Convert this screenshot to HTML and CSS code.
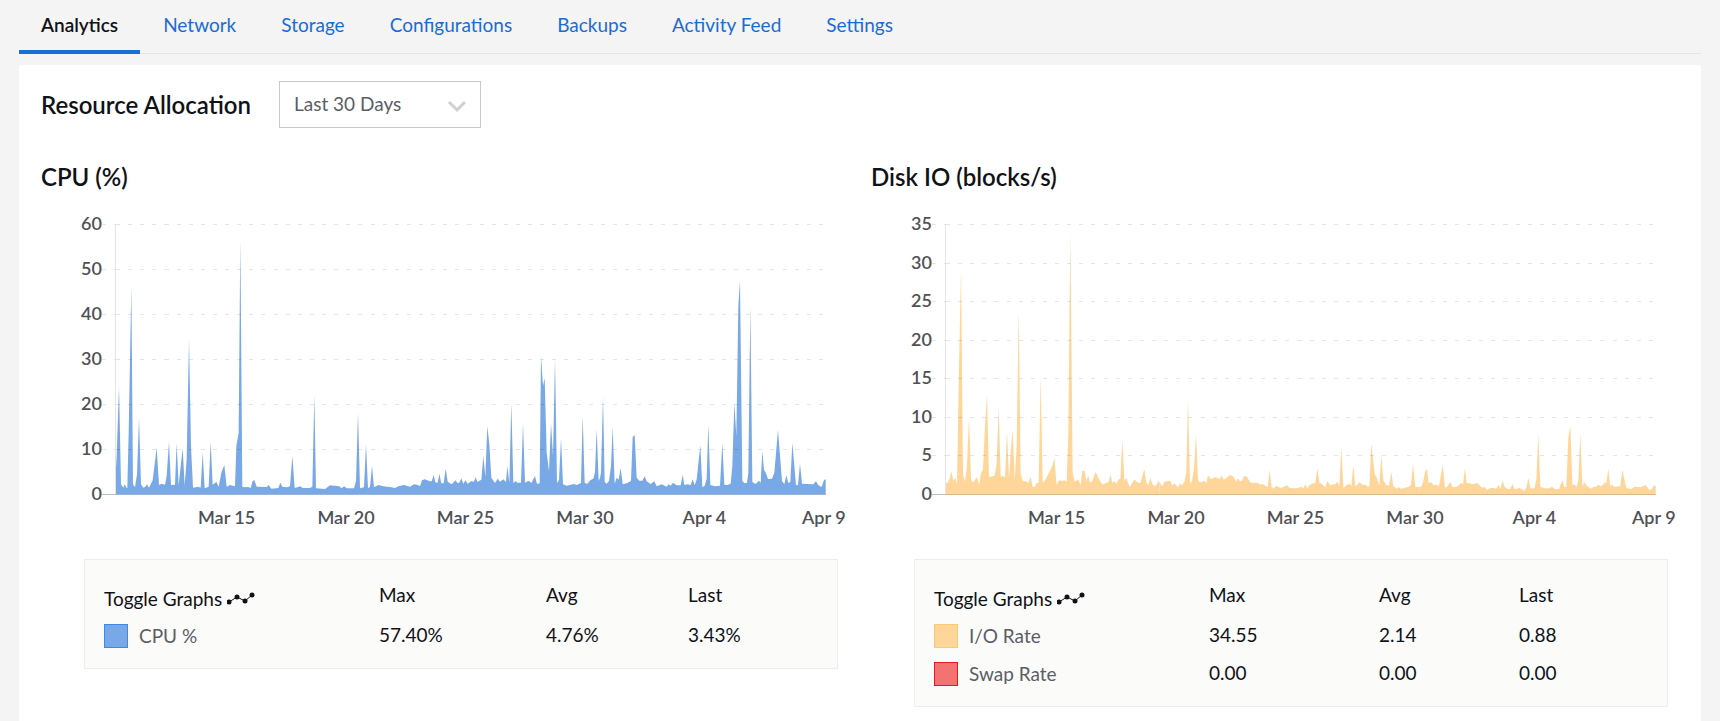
FILE: index.html
```html
<!DOCTYPE html>
<html lang="en">
<head>
<meta charset="utf-8">
<meta name="viewport" content="width=device-width, initial-scale=1">
<title>Analytics</title>
<link rel="stylesheet" href="styles.css">
</head>
<body>
<nav class="tabs" aria-label="Sections">
  <a class="tab tab-active" href="#analytics" aria-current="page">Analytics</a>
  <a class="tab" href="#network">Network</a>
  <a class="tab" href="#storage">Storage</a>
  <a class="tab" href="#configurations">Configurations</a>
  <a class="tab" href="#backups">Backups</a>
  <a class="tab" href="#activity">Activity Feed</a>
  <a class="tab" href="#settings">Settings</a>
</nav>
<main class="panel">
  <header class="panel-head">
    <h2 class="title"><label for="range">Resource Allocation</label></h2>
    <div class="picker">
      <select class="picker-select" id="range">
        <option>Last 30 Days</option>
        <option>Last 24 Hours</option>
      </select>
      <svg class="picker-arrow" width="20" height="14" viewBox="0 0 20 14" aria-hidden="true"><path d="M2 2l8 8 8-8"/></svg>
    </div>
  </header>
  <div class="charts">
    <section class="chart">
      <h2 class="title">CPU (%)</h2>
      <svg class="plot" role="img" aria-label="CPU usage over the last 30 days">
        <svg class="area area-cpu" width="100%" height="270" viewBox="0 0 2133 810" preserveAspectRatio="none">
          <path transform="translate(-165 -74)" d="M165 884V860L170 770 177 560 183 855 190 865 194 855 200 866 202 866 206 700 214 260 219 855 225 864 231 825 237 655 243 855 250 865 256 862 261 855 267 865 278 843 290 745 297 857 305 853 315 856 320 830 327 727 333 857 345 856 350 732 356 858 362 800 368 747 374 858 380 780 387 420 393 740 399 865 415 862 422 865 428 760 434 867 446 862 452 727 458 856 469 848 476 862 484 820 493 797 500 862 510 857 525 861 529 740 536 700 541 120 547 862 555 864 565 863 572 866 578 845 583 842 590 862 620 863 626 857 634 868 655 866 661 850 667 862 681 864 690 861 697 770 704 866 714 863 721 861 728 866 750 866 757 862 763 588 768 867 795 869 810 858 838 861 840 863V884Z"/>
          <path transform="translate(675 -74)" d="M0 884V863L5 867 12 861 20 867 42 867 48 845 54 640 60 867 72 864 78 735 84 867 90 862 96 800 102 864 115 857 130 861 155 864 165 866 175 861 192 857 210 862 222 855 234 857 240 861 246 843 254 840 270 846 275 846 281 826 286 849 293 850 298 823 304 852 311 852 317 808 323 847 335 855 347 843 352 851 358 850 364 837 370 853 376 843 383 853 395 845 401 848 407 834 412 848 424 841 430 770 436 832 442 680 448 735 454 835 465 851 473 838 480 847 490 840 498 848 502 800 508 850 514 612 520 852 526 845 532 850 543 850 549 673 555 850 566 844 574 851 585 830 591 854 599 852 603 470 609 560 614 536 620 760 627 815 633 672 639 770 645 478 651 852 657 842 663 717 669 855 680 859 702 854 710 857 723 851 728 650 734 850 741 854 752 842 760 838 765 818 770 690 776 845 780 835V884Z"/>
          <path transform="translate(1455 -74)" d="M0 884V835L3 820 9 592 14 848 20 853 27 845 33 800 38 683 44 853 50 835 56 841 62 806 68 855 80 852 93 845 98 713 104 707 110 835 118 844 127 844 134 831 140 846 152 854 163 846 170 861 185 855 200 862 206 855 212 859 219 850 230 858 242 858 248 826 253 857 262 855 272 857 278 840 284 858 290 840 301 738 307 863 314 860 320 838 325 675 331 857 345 861 360 859 367 730 373 856 382 857 392 853 397 800 403 610 409 710 415 320 420 242 427 845 434 852 441 850 445 820 451 322 457 848 467 854 477 844 482 850 487 755 492 812 497 820 504 839 516 838 523 820 534 692 546 845 553 854 559 828 565 851 571 848 577 730 588 858 594 857 600 793 606 853 640 855 648 846 655 858 665 863 672 842 677 840V884Z"/>
        </svg>
        <g class="grid">
          <line x1="1" x2="100%" y1="0" y2="0" pathLength="703"/><line x1="1" x2="100%" y1="45" y2="45" pathLength="703"/><line x1="1" x2="100%" y1="90" y2="90" pathLength="703"/><line x1="1" x2="100%" y1="135" y2="135" pathLength="703"/><line x1="1" x2="100%" y1="180" y2="180" pathLength="703"/><line x1="1" x2="100%" y1="225" y2="225" pathLength="703"/>
          <path d="M-13 0H0M-13 45H0M-13 90H0M-13 135H0M-13 180H0M-13 225H0"/>
        </g>
        <line class="axis-y" x1="0" x2="0" y1="0" y2="270"/>
        <line class="axis-x" x1="-13" x2="0" y1="270" y2="270"/>
        <line class="base-cpu" x1="0" x2="100%" y1="270" y2="270"/>
        <g class="label-y">
          <text x="-13" y="6">60</text><text x="-13" y="51">50</text><text x="-13" y="96">40</text><text x="-13" y="141">30</text><text x="-13" y="186">20</text><text x="-13" y="231">10</text><text x="-13" y="276">0</text>
        </g>
        <g class="label-x">
          <text x="15.7%" y="300">Mar 15</text><text x="32.5%" y="300">Mar 20</text><text x="49.3%" y="300">Mar 25</text><text x="66.1%" y="300">Mar 30</text><text x="82.9%" y="300">Apr 4</text><text x="99.7%" y="300">Apr 9</text>
        </g>
      </svg>
      <div class="legend">
        <table class="stats">
          <colgroup><col class="col-name"><col class="col-max"><col class="col-avg"><col></colgroup>
          <thead><tr>
            <th class="toggle" scope="col">Toggle Graphs <svg class="spark" width="28" height="14" viewBox="0 0 28 14" aria-hidden="true"><path d="M2 10L10 5 18 9 25 3"/><circle cx="2" cy="10" r="2.5"/><circle cx="10" cy="5" r="2.5"/><circle cx="18" cy="9" r="2.5"/><circle cx="25" cy="3" r="2.5"/></svg></th>
            <th scope="col">Max</th><th scope="col">Avg</th><th scope="col">Last</th>
          </tr></thead>
          <tbody>
            <tr><th scope="row"><button class="series" type="button"><span class="swatch swatch-cpu"></span>CPU %</button></th><td>57.40%</td><td>4.76%</td><td>3.43%</td></tr>
          </tbody>
        </table>
      </div>
    </section>
    <section class="chart">
      <h2 class="title">Disk IO (blocks/s)</h2>
      <svg class="plot" role="img" aria-label="Disk IO over the last 30 days">
        <svg class="area area-io" width="100%" height="270" viewBox="0 0 2133 810" preserveAspectRatio="none">
          <path transform="translate(-136 -74)" d="M136 884V851L143 851 150 838 155 815 161 845 167 835 172 855 177 560 184 205 190 825 196 847 202 800 208 650 214 838 220 850 232 833 238 857 244 822 250 810 255 700 262 585 268 833 285 829 291 790 297 622 303 832 310 829 316 836 322 695 328 838 333 760 339 690 345 845 351 740 357 330 363 825 369 845 378 846 386 851 393 833 399 863 405 864 411 851 417 851 423 530 429 850 437 842 450 816 458 800 464 775 471 858 478 843 488 845 495 843 501 848 506 700 512 97 519 820 525 848 535 840 543 857 548 815 555 814 560 845 566 829 571 850 578 845 588 818 597 838 608 856 620 850 627 848 632 825 638 850 644 845 650 853 656 841 662 838 668 718 674 845 680 836 690 863 698 851 704 840 712 849 722 852 728 830 734 810 740 850 746 858 752 835 758 855 768 861 776 845 780 850V884Z"/>
          <path transform="translate(644 -74)" d="M0 884V850L8 861 14 847 32 844 38 860 44 852 55 864 61 853 67 858 74 848 80 820 85 598 91 855 97 845 103 810 109 705 115 842 121 850 134 844 140 853 145 827 153 839 168 833 180 840 186 828 192 841 200 837 211 826 222 833 229 847 235 837 241 846 246 845 253 831 261 831 272 850 295 851 302 856 308 854 318 860 324 863 330 812 336 863 342 868 350 859 362 866 372 863 381 858 390 866 403 867 415 866 424 862 431 867 437 855 443 867 450 857 457 853 467 851 473 806 479 850 487 854 497 864 503 846 512 858 522 855 527 855 533 847 539 860 545 742 551 866 560 858 569 853 575 860 581 797 587 862 599 849 610 857 618 856 624 863 629 861 635 732 645 825 652 837 659 860 665 767 671 843 680 857 688 860 695 818 701 860 712 868 718 863 724 868 745 863 754 857 760 793 767 864 777 862 780 864V884Z"/>
          <path transform="translate(1424 -74)" d="M0 884V864L4 862 10 850 16 818 22 808 27 852 33 848 42 858 50 856 58 861 64 825 69 798 76 865 82 863 92 848 98 862 110 863 118 858 124 850 130 856 136 805 141 852 150 852 158 855 174 851 184 863 190 865 195 862 202 872 212 866 222 866 230 868 237 857 242 868 249 844 255 863 265 870 272 868 278 854 285 870 300 866 315 874 321 862 326 836 332 865 338 868 345 865 350 840 356 703 362 863 375 867 390 867 397 862 405 869 418 870 428 842 434 864 440 862 446 715 452 680 458 858 464 855 470 864 476 845 482 700 488 862 494 848 502 860 513 868 523 862 530 862 536 856 543 861 550 857 555 849 560 852 566 808 572 862 577 855 583 862 602 861 608 812 620 866 635 869 645 862 662 864 678 857 690 873 697 868 703 858 708 860V884Z"/>
        </svg>
        <g class="grid">
          <line x1="1" x2="100%" y1="0" y2="0" pathLength="703"/><line x1="1" x2="100%" y1="39" y2="39" pathLength="703"/><line x1="1" x2="100%" y1="77" y2="77" pathLength="703"/><line x1="1" x2="100%" y1="116" y2="116" pathLength="703"/><line x1="1" x2="100%" y1="154" y2="154" pathLength="703"/><line x1="1" x2="100%" y1="193" y2="193" pathLength="703"/><line x1="1" x2="100%" y1="231" y2="231" pathLength="703"/>
          <path d="M-13 0H0M-13 39H0M-13 77H0M-13 116H0M-13 154H0M-13 193H0M-13 231H0"/>
        </g>
        <line class="axis-y" x1="0" x2="0" y1="0" y2="270"/>
        <line class="axis-x" x1="-13" x2="0" y1="270" y2="270"/>
        <line class="base-io" x1="0" x2="100%" y1="270" y2="270"/>
        <g class="label-y">
          <text x="-13" y="6">35</text><text x="-13" y="45">30</text><text x="-13" y="83">25</text><text x="-13" y="122">20</text><text x="-13" y="160">15</text><text x="-13" y="199">10</text><text x="-13" y="237">5</text><text x="-13" y="276">0</text>
        </g>
        <g class="label-x">
          <text x="15.7%" y="300">Mar 15</text><text x="32.5%" y="300">Mar 20</text><text x="49.3%" y="300">Mar 25</text><text x="66.1%" y="300">Mar 30</text><text x="82.9%" y="300">Apr 4</text><text x="99.7%" y="300">Apr 9</text>
        </g>
      </svg>
      <div class="legend">
        <table class="stats stats-io">
          <colgroup><col class="col-name"><col class="col-max"><col class="col-avg"><col></colgroup>
          <thead><tr>
            <th class="toggle" scope="col">Toggle Graphs <svg class="spark" width="28" height="14" viewBox="0 0 28 14" aria-hidden="true"><path d="M2 10L10 5 18 9 25 3"/><circle cx="2" cy="10" r="2.5"/><circle cx="10" cy="5" r="2.5"/><circle cx="18" cy="9" r="2.5"/><circle cx="25" cy="3" r="2.5"/></svg></th>
            <th scope="col">Max</th><th scope="col">Avg</th><th scope="col">Last</th>
          </tr></thead>
          <tbody>
            <tr><th scope="row"><button class="series" type="button"><span class="swatch swatch-io"></span>I/O Rate</button></th><td>34.55</td><td>2.14</td><td>0.88</td></tr>
            <tr><th scope="row"><button class="series" type="button"><span class="swatch swatch-swap"></span>Swap Rate</button></th><td>0.00</td><td>0.00</td><td>0.00</td></tr>
          </tbody>
        </table>
      </div>
    </section>
  </div>
</main>
</body>
</html>
```
FILE: styles.css
```css
* { box-sizing: border-box; }
body {
  margin: 0;
  padding: 0 19px;
  background: #f4f4f4;
  color: #101218;
  font: 400 19px/24px Lato, "Open Sans", sans-serif;
}
.tabs {
  display: flex;
  gap: 1px;
  height: 54px;
  box-shadow: inset 0 -1px 0 #e3e5e8;
}
.tab {
  padding: 13px 22px 0;
  color: #1a6cd4;
  text-decoration: none;
}
.tab-active {
  border-bottom: 4px solid #1670d6;
  color: #101218;
  font-weight: 600;
}
.panel {
  margin-top: 11px;
  padding: 16px 22px 8px;
  min-height: calc(100vh - 65px);
  background: #fff;
}
.panel-head { display: flex; align-items: center; gap: 28px; }
.title {
  margin: 0;
  font-size: 24px;
  line-height: 32px;
  font-weight: 600;
}
.picker { display: grid; align-items: center; width: 202px; }
.picker-select {
  grid-area: 1 / 1;
  width: 100%;
  height: 47px;
  padding: 0 40px 2px 14px;
  appearance: none;
  border: 1px solid #c6c8ca;
  border-radius: 0;
  background: #fff;
  color: #5a5e66;
  font: inherit;
}
.picker-arrow {
  grid-area: 1 / 1;
  justify-self: end;
  margin: 4px 14px 0 0;
  fill: none;
  stroke: #d0d0d0;
  stroke-width: 3;
  pointer-events: none;
}
.charts {
  display: grid;
  grid-template-columns: repeat(2, minmax(0, 1fr));
  gap: 22px;
  margin-top: 33px;
}
.chart { display: flex; flex-direction: column; }
.plot {
  display: block;
  width: calc(100% - 97px);
  height: 300px;
  margin: 31px 23px 35px 74px;
  overflow: visible;
}
.area-cpu { fill: #78a9e6; }
.area-io { fill: #ffd699; }
.grid { fill: none; stroke: #000; stroke-opacity: .1; stroke-width: 1; stroke-dasharray: 4 8; }
.grid, .axis-y, .axis-x, .base-cpu, .base-io { shape-rendering: crispEdges; }
.axis-y { stroke: #e5e5e5; }
.axis-x { stroke: #c0c0c0; }
.base-cpu { stroke: #9fb4d6; }
.base-io { stroke: #d9b98a; }
.label-x, .label-y { fill: #505155; font-size: 18px; font-weight: 600; }
.label-x { text-anchor: middle; }
.label-y { text-anchor: end; }
.legend {
  margin: 0 11px 0 43px;
  padding: 11px 19px 13px;
  border: 1px solid #ededed;
  background: #fbfbfa;
}
.stats { width: 100%; table-layout: fixed; border-collapse: collapse; }
.stats th, .stats td { padding: 0; text-align: left; font-weight: 400; }
.stats thead th { height: 46px; padding-top: 2px; }
.stats thead .toggle { padding-top: 9px; }
.stats tbody th { height: 38px; }
.stats tbody td { padding-bottom: 2px; }
.col-name { width: 275px; }
.col-max { width: 167px; }
.col-avg { width: 142px; }
.stats-io .col-max { width: 170px; }
.stats-io .col-avg { width: 140px; }
.spark { fill: #101218; }
.spark path { fill: none; stroke: #101218; stroke-width: 1; }
.series {
  display: flex;
  align-items: center;
  gap: 11px;
  padding: 0;
  border: 0;
  background: none;
  color: #5a5e66;
  font: inherit;
}
.swatch { width: 24px; height: 24px; border: 1px solid; }
.swatch-cpu { background: #78a9e6; border-color: #3c8ae8; }
.swatch-io { background: #ffd699; border-color: #ffc871; }
.swatch-swap { background: #f37373; border-color: #ec1a1a; }
```
